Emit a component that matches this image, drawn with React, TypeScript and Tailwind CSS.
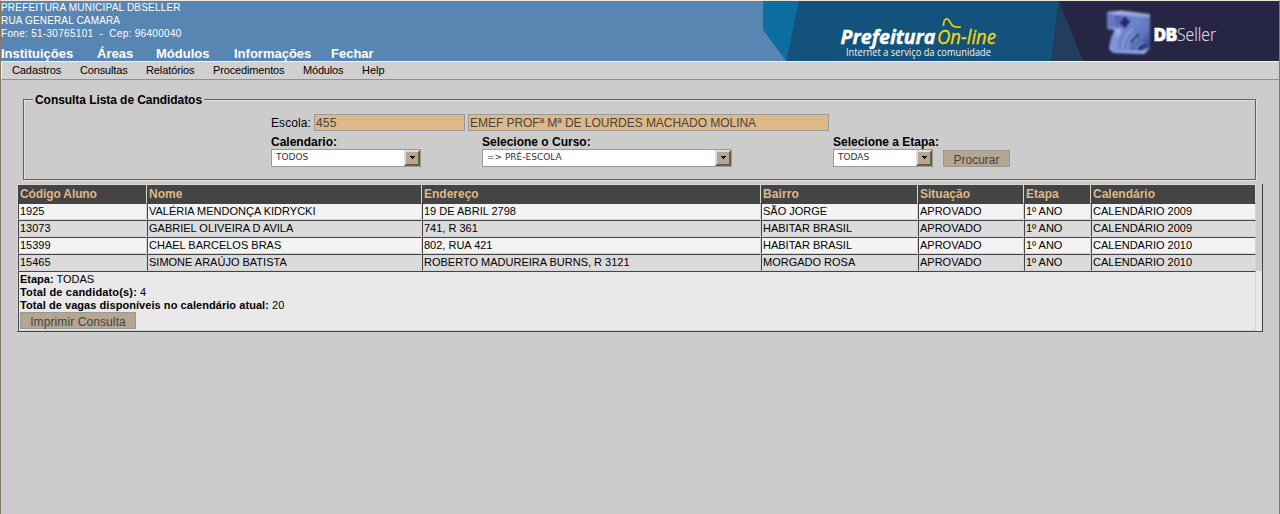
import React from "react";

const COLS = "grid grid-cols-[129px_275px_339px_157px_106px_67px_165px]";

const headers = [
  { label: "Código Aluno", tracking: "tracking-[-0.12px]" },
  { label: "Nome", tracking: "" },
  { label: "Endereço", tracking: "" },
  { label: "Bairro", tracking: "tracking-[0.1px]" },
  { label: "Situação", tracking: "" },
  { label: "Etapa", tracking: "" },
  { label: "Calendário", tracking: "" },
];

const rows = [
  ["1925", "VALÉRIA MENDONÇA KIDRYCKI", "19 DE ABRIL 2798", "SÃO JORGE", "APROVADO", "1º ANO", "CALENDÁRIO 2009"],
  ["13073", "GABRIEL OLIVEIRA D AVILA", "741, R 361", "HABITAR BRASIL", "APROVADO", "1º ANO", "CALENDÁRIO 2009"],
  ["15399", "CHAEL BARCELOS BRAS", "802, RUA 421", "HABITAR BRASIL", "APROVADO", "1º ANO", "CALENDARIO 2010"],
  ["15465", "SIMONE ARAÚJO BATISTA", "ROBERTO MADUREIRA BURNS, R 3121", "MORGADO ROSA", "APROVADO", "1º ANO", "CALENDARIO 2010"],
];

function Banner() {
  return (
    <svg width="516" height="60" viewBox="763 1 516 60" className="block shrink-0">
      <defs>
        <linearGradient id="face" x1="0" x2="1" y1="0" y2="1">
          <stop offset="0" stopColor="#4a55a8" />
          <stop offset="0.35" stopColor="#6f86cc" />
          <stop offset="0.65" stopColor="#6078c2" />
          <stop offset="1" stopColor="#2f3c86" />
        </linearGradient>
        <linearGradient id="side" x1="0" x2="1" y1="1" y2="0">
          <stop offset="0" stopColor="#7f95dc" />
          <stop offset="0.5" stopColor="#a3bbf2" />
          <stop offset="1" stopColor="#8fa2dd" />
        </linearGradient>
        <filter id="soft" x="-10%" y="-10%" width="120%" height="120%">
          <feGaussianBlur stdDeviation="0.8" />
        </filter>
      </defs>
      <path d="M763 1H1279V61H763Z" fill="#5786b2" />
      <path d="M763 1H800L786 61L763 30Z" fill="#0b6e9e" />
      <path d="M799 1H1060V61H786Z" fill="#13537b" />
      <path d="M1059 1H1279V61H1051Z" fill="#272544" />
      <path d="M1059 1L1083 61H1051Z" fill="#233e5c" />
      <text x="840.500" y="44" fontFamily="'Open Sans', sans-serif" fontSize="19.500" fontWeight="700" fontStyle="italic" fill="#fff" stroke="#fff" strokeWidth=".4" textLength="95" lengthAdjust="spacingAndGlyphs">Prefeitura</text>
      <text x="937" y="44" fontFamily="'Open Sans', sans-serif" fontSize="20.500" fontStyle="italic" fill="#f3d60c" stroke="#f3d60c" strokeWidth=".3" textLength="59" lengthAdjust="spacingAndGlyphs">On-line</text>
      <path d="M943.500 26C943.500 19 946.500 17 949 20.500C952 25 952 28 961 27" fill="none" stroke="#e6cb16" strokeWidth="1.700" />
      <text x="846" y="55.500" fontFamily="'Open Sans', sans-serif" fontSize="10.500" fill="#eef4f8" textLength="145" lengthAdjust="spacingAndGlyphs">Internet a serviço da comunidade</text>
      <g filter="url(#soft)">
        <path d="M1107 12L1121 10.500L1150 14L1150 48L1144 54L1113 53L1109 49L1111 38L1115 30L1107 29Z" fill="url(#side)" />
        <path d="M1107 12.500L1115 14V28L1107 29Z" fill="#6a78c2" />
        <path d="M1115 14L1150 16V48L1142 51L1118 50L1117 42L1122 29L1115 28Z" fill="url(#face)" />
        <path d="M1113 13L1150 15V17L1114 15Z" fill="#98a8e0" />
        <path d="M1111 38L1117 33L1118 51L1113 52Z" fill="#7e94da" />
        <path d="M1125 16L1130.500 22L1125 28.500L1119.500 23Z" fill="#262174" />
        <path d="M1133 29C1126 34 1123 40 1122 49" fill="none" stroke="#86a0e0" strokeWidth="2" />
        <path d="M1139 34.500C1135 36 1132 39 1131 43" fill="none" stroke="#1e2363" strokeWidth="2.500" />
        <path d="M1136 34C1130 38 1128 43 1127 50" fill="none" stroke="#91aae6" strokeWidth="1.300" />
        <path d="M1146 45C1142 45.500 1140 47 1139 50" fill="none" stroke="#1b2058" strokeWidth="2.500" />
        <path d="M1144 43C1139 44 1137 46 1136 50" fill="none" stroke="#8099da" strokeWidth="1.200" />
      </g>
      <text x="1154" y="41" fontFamily="Inter, sans-serif" fontSize="17.500" fontWeight="900" fill="#fff" stroke="#fff" strokeWidth=".6" textLength="23" lengthAdjust="spacingAndGlyphs">DB</text>
      <text x="1177" y="41" fontFamily="'Open Sans', sans-serif" fontSize="18" fontWeight="300" fill="#dcdce6" stroke="#dcdce6" strokeWidth=".2" textLength="39" lengthAdjust="spacingAndGlyphs">Seller</text>
    </svg>
  );
}

function Select({ value, className }: { value: string; className: string }) {
  return (
    <div className={`flex h-[18px] justify-between border border-[#999] bg-white font-normal ${className}`}>
      <span className="pl-1 font-['DejaVu_Sans'] text-[9px] leading-[14px] whitespace-pre text-[#333]">{value}</span>
      <span className="flex h-4 w-4 items-center justify-center border-2 border-t-[#e0dcd4] border-r-[#6a5d4c] border-b-[#6a5d4c] border-l-[#e0dcd4] bg-[#b5a68f]">
        <svg width="6" height="3" viewBox="0 0 6 3" className="mb-px" shapeRendering="crispEdges">
          <path d="M0 0H6L3 3Z" fill="#000" />
        </svg>
      </span>
    </div>
  );
}

function Button({ children, className }: { children: React.ReactNode; className: string }) {
  return (
    <button className={`flex justify-center border border-[#999] bg-[#b5a68f] text-[12px] leading-[18px] font-normal whitespace-nowrap text-[#444] ${className}`}>
      {children}
    </button>
  );
}

export default function App() {
  return (
    <div className="flex h-[514px] w-[1280px] flex-col overflow-hidden border-t border-r border-l border-t-[#eae6dd] border-r-[#83786a] border-l-[#83786a] bg-[#ccc] font-['Liberation_Sans',sans-serif] text-black">
      <header className="flex h-[60px] shrink-0 justify-between bg-[#5786b2] text-white">
        <div className="flex flex-col">
          <div className="h-[44px] shrink-0 text-[10px] leading-[13px] whitespace-pre">
            <p className="tracking-[0.2px]">PREFEITURA MUNICIPAL DBSELLER</p>
            <p className="tracking-[0.16px]">RUA GENERAL CAMARA</p>
            <p className="tracking-[0.3px]">Fone: 51-30765101  -  Cep: 96400040</p>
          </div>
          <nav className="flex shrink-0 text-[13px] leading-[17px] font-bold">
            <a className="w-24">Instituições</a>
            <a className="w-[59px]">Áreas</a>
            <a className="w-[78px]">Módulos</a>
            <a className="w-[97px]">Informações</a>
            <a>Fechar</a>
          </nav>
        </div>
        <Banner />
      </header>
      <nav className="flex h-[19px] shrink-0 border-t border-b border-l border-t-[#f4f4f4] border-b-[#909090] border-l-[#f4f4f4] bg-[#d0d0d0] pl-[10px] text-[11px] leading-[17px]">
        <a className="w-[68px] tracking-[-0.1px]">Cadastros</a>
        <a className="w-[66px] tracking-[-0.15px]">Consultas</a>
        <a className="w-[67px] tracking-[-0.1px]">Relatórios</a>
        <a className="w-[90px] tracking-[-0.15px]">Procedimentos</a>
        <a className="w-[59px] tracking-[-0.2px]">Módulos</a>
        <a>Help</a>
      </nav>

      <fieldset className="mt-[13px] ml-[22px] h-[87px] w-[1233px] shrink-0 border border-[#6b5f50] shadow-[inset_1px_1px_0_#e6e0d4,1px_1px_0_#e6e0d4]">
        <legend className="ml-[9px] h-[13px] w-[171px] bg-[#ccc] px-[2px] text-[12px] leading-[14px] font-bold tracking-[-0.06px] whitespace-nowrap">Consulta Lista de Candidatos</legend>
        <div className="mt-[8px] ml-[247px] flex h-[18px] items-start text-[12px]">
          <span className="w-[43px] leading-[18px] tracking-[0.1px]">Escola:</span>
          <span className="h-[17px] w-[151px] border border-[#999] bg-[#deb887] pl-px leading-[16px] tracking-[0.2px] text-[#444]">455</span>
          <span className="ml-[3px] h-[17px] w-[361px] border border-[#999] bg-[#deb887] pl-px leading-[16px] tracking-[-0.04px] text-[#444]">EMEF PROFª Mª DE LOURDES MACHADO MOLINA</span>
        </div>
        <div className="mt-[3px] ml-[247px] flex text-[12px] leading-[14px] font-bold">
          <div className="w-[211px]">
            <p>Calendario:</p>
            <Select value="TODOS" className="w-[150px]" />
          </div>
          <div className="w-[351px]">
            <p>Selecione o Curso:</p>
            <Select value="=> PRÉ-ESCOLA" className="w-[250px]" />
          </div>
          <div className="w-[110px]">
            <p>Selecione a Etapa:</p>
            <Select value="TODAS" className="w-[100px]" />
          </div>
          <Button className="mt-[15px] h-[17px] w-[67px]">Procurar</Button>
        </div>
      </fieldset>

      <main className="mt-1 ml-4 flex h-[148px] w-[1246px] shrink-0 border-r border-b border-[#444]">
        <section className="flex w-[1239px] flex-col border-t border-l border-[#d6d6d6]">
          <div className={`${COLS} h-[18px] shrink-0`}>
            {headers.map((h) => (
              <div key={h.label} className={`border-r border-b border-[#d4d4d4] bg-[#444] pl-[2px] text-[12px] leading-[18px] font-bold whitespace-nowrap text-[#deb887] ${h.tracking}`}>{h.label}</div>
            ))}
          </div>
          {rows.map((row, i) => (
            <div key={row[0]} className={`${COLS} h-[17px] shrink-0`}>
              {row.map((cell, j) => (
                <div
                  key={j}
                  className={`border border-t-[#444] border-r-[#d4d4d4] border-b-[#d4d4d4] border-l-[#444] pl-px text-[11px] leading-[15px] whitespace-nowrap ${i % 2 ? "bg-[#dbdbdb]" : "bg-[#f3f3f3]"}`}
                >
                  {cell}
                </div>
              ))}
            </div>
          ))}
          <div className="h-[60px] border border-t-[#444] border-r-[#d4d4d4] border-b-[#d4d4d4] border-l-[#444] bg-[#e9e9e9] pt-px pl-px text-[11px] leading-[13px]">
            <p><b>Etapa:</b> TODAS</p>
            <p><b className="tracking-[0.16px]">Total de candidato(s):</b> 4</p>
            <p><b className="tracking-[0.06px]">Total de vagas disponíveis no calendário atual:</b> 20</p>
            <Button className="h-[17px] w-[116px] tracking-[0.1px]">Imprimir Consulta</Button>
          </div>
        </section>
        <div className="flex flex-1 flex-col">
          <div className="h-[87px]" />
          <div className="flex-1 bg-[#e9e9e9]" />
        </div>
      </main>
    </div>
  );
}
